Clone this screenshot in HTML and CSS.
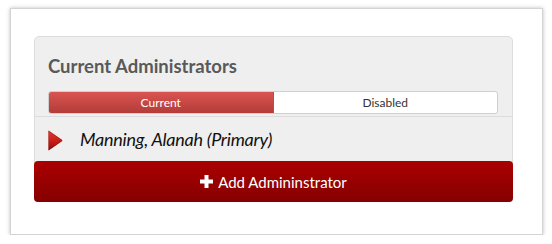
FILE: index.html
```html
<!DOCTYPE html>
<html>
<head>
<meta charset="utf-8">
<link rel="stylesheet" href="styles.css">
</head>
<body>
<div class="frame">
  <div class="panel">
    <h2 class="title">Current Administrators</h2>
    <div class="tabs">
      <div class="tab active">Current</div>
      <div class="tab">Disabled</div>
    </div>
    <div class="row">
      <svg class="arrow" width="16" height="21" viewBox="0 0 16 21">
        <defs>
          <linearGradient id="ag" x1="0" y1="0" x2="0" y2="1">
            <stop offset="0" stop-color="#e23a32"/>
            <stop offset="0.5" stop-color="#c81f18"/>
            <stop offset="1" stop-color="#8e0c08"/>
          </linearGradient>
        </defs>
        <path d="M1.5 1 Q1 0.5 2 0.8 L15 9.8 Q15.8 10.5 15 11.2 L2 20.2 Q1 20.6 1.5 19.8 Z" fill="url(#ag)"/>
        <path d="M1.5 1 L15 10.5 L1.5 19.8 Z" fill="none" stroke="#7a0a06" stroke-width="0.6" opacity="0.5"/>
      </svg>
      <span class="name">Manning, Alanah (Primary)</span>
    </div>
    <button class="add">
      <svg class="plus" width="13" height="13" viewBox="0 0 13 13"><path d="M4.5 0h4v4.5h4.5v4h-4.5v4.5h-4v-4.5h-4.5v-4h4.5z" fill="#fff"/></svg>
      <span>Add Admininstrator</span>
    </button>
  </div>
</div>
</body>
</html>
```

FILE: styles.css
```css
html, body {
  margin: 0;
  padding: 0;
  background: #fff;
}
body {
  font-family: "Source Sans Pro", Lato, "Open Sans", sans-serif;
  color: #333;
}
.frame {
  margin: 8px 0 0 10px;
  width: 533px;
  height: 227px;
  box-sizing: border-box;
  border: 1px solid #d4d4d4;
  box-shadow: 0 0 4px rgba(0,0,0,0.25);
  background: #fff;
  padding: 27px 0 0 23px;
}
.panel {
  width: 479px;
  box-sizing: border-box;
  background: #efefef;
  border: 1px solid #dcdcdc;
  border-radius: 5px;
}
.title {
  margin: 0;
  padding: 15px 0 0 13px;
  height: 36px;
  box-sizing: border-box;
  font-size: 18.5px;
  font-weight: 700;
  color: #595959;
  line-height: 28px;
}
.tabs {
  display: flex;
  margin: 18px 14px 0 13px;
  height: 23px;
  box-sizing: border-box;
  border: 1px solid #cfcfcf;
  border-radius: 3px;
  background: #fff;
  overflow: hidden;
}
.tab {
  flex: 1;
  text-align: center;
  font-size: 12px;
  line-height: 21px;
  color: #333;
}
.tab.active {
  background: linear-gradient(#d95450, #b33c39);
  color: #fff;
  border-right: 1px solid #c44;
}
.row {
  margin-top: 2px;
  border-top: 1px solid #dcdcdc;
  height: 45px;
  box-sizing: border-box;
  display: flex;
  align-items: center;
  padding-left: 12px;
}
.arrow {
  display: block;
  margin-top: 2px;
}
.name {
  margin-left: 17px;
  font-size: 18px;
  font-style: italic;
  color: #111;
  letter-spacing: -0.25px;
}
.add {
  display: flex;
  align-items: center;
  justify-content: center;
  width: calc(100% + 2px);
  margin: 0 -1px -1px;
  height: 41px;
  border: 0;
  border-radius: 4px;
  background: linear-gradient(#ab0000, #850000);
  color: #fff;
  font-family: inherit;
  font-size: 15px;
  cursor: pointer;
}
.plus {
  margin-right: 5px;
}
```
